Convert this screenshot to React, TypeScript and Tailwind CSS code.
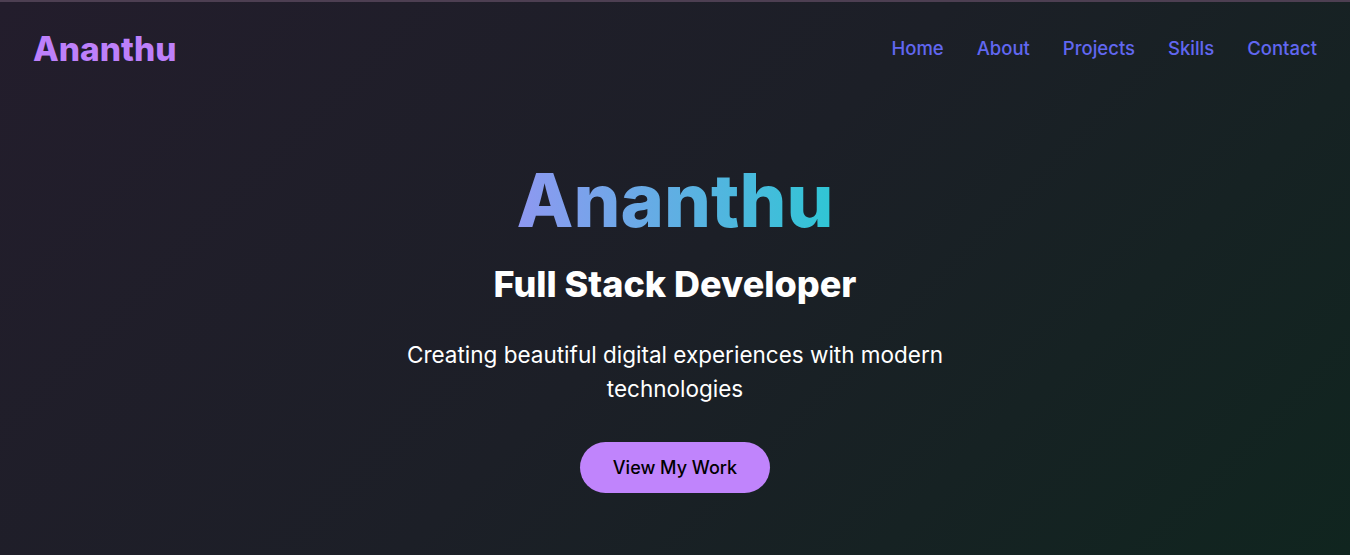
export default function App() {
  const font = { fontFamily: 'Inter, "Noto Sans", sans-serif' };
  return (
    <div
      className="min-h-[555px] w-full border-t-2 border-[#4d3f52] bg-[linear-gradient(135deg,#231d2c_0%,#1c1f27_50%,#10251f_100%)] text-white"
      style={font}
    >
      <nav className="flex items-center justify-between px-[33px] pt-[27px] pb-[26px]">
        <div className="text-[33.5px] font-extrabold leading-[40px] text-[#bd80fa]">Ananthu</div>
        <ul className="flex items-center gap-[33px] text-[18.5px] font-medium text-[#6167f1]">
          <li>Home</li>
          <li>About</li>
          <li>Projects</li>
          <li>Skills</li>
          <li>Contact</li>
        </ul>
      </nav>
      <section className="flex flex-col items-center pt-[65px] text-center">
        <h1 className="inline-block bg-[linear-gradient(90deg,#8f98f1,#2fc6d5)] bg-clip-text text-[74px] font-extrabold leading-[80px] text-transparent">
          Ananthu
        </h1>
        <h2 className="mt-[22px] text-[36px] font-extrabold leading-[44px] text-white">Full Stack Developer</h2>
        <p className="mt-[32px] max-w-[600px] text-[22.5px] leading-[34px] text-white">
          Creating beautiful digital experiences with modern technologies
        </p>
        <button className="mt-[36px] rounded-full bg-[#c084fc] px-[33px] py-[13px] text-[18px] font-medium leading-[25px] text-black">
          View My Work
        </button>
      </section>
    </div>
  );
}
